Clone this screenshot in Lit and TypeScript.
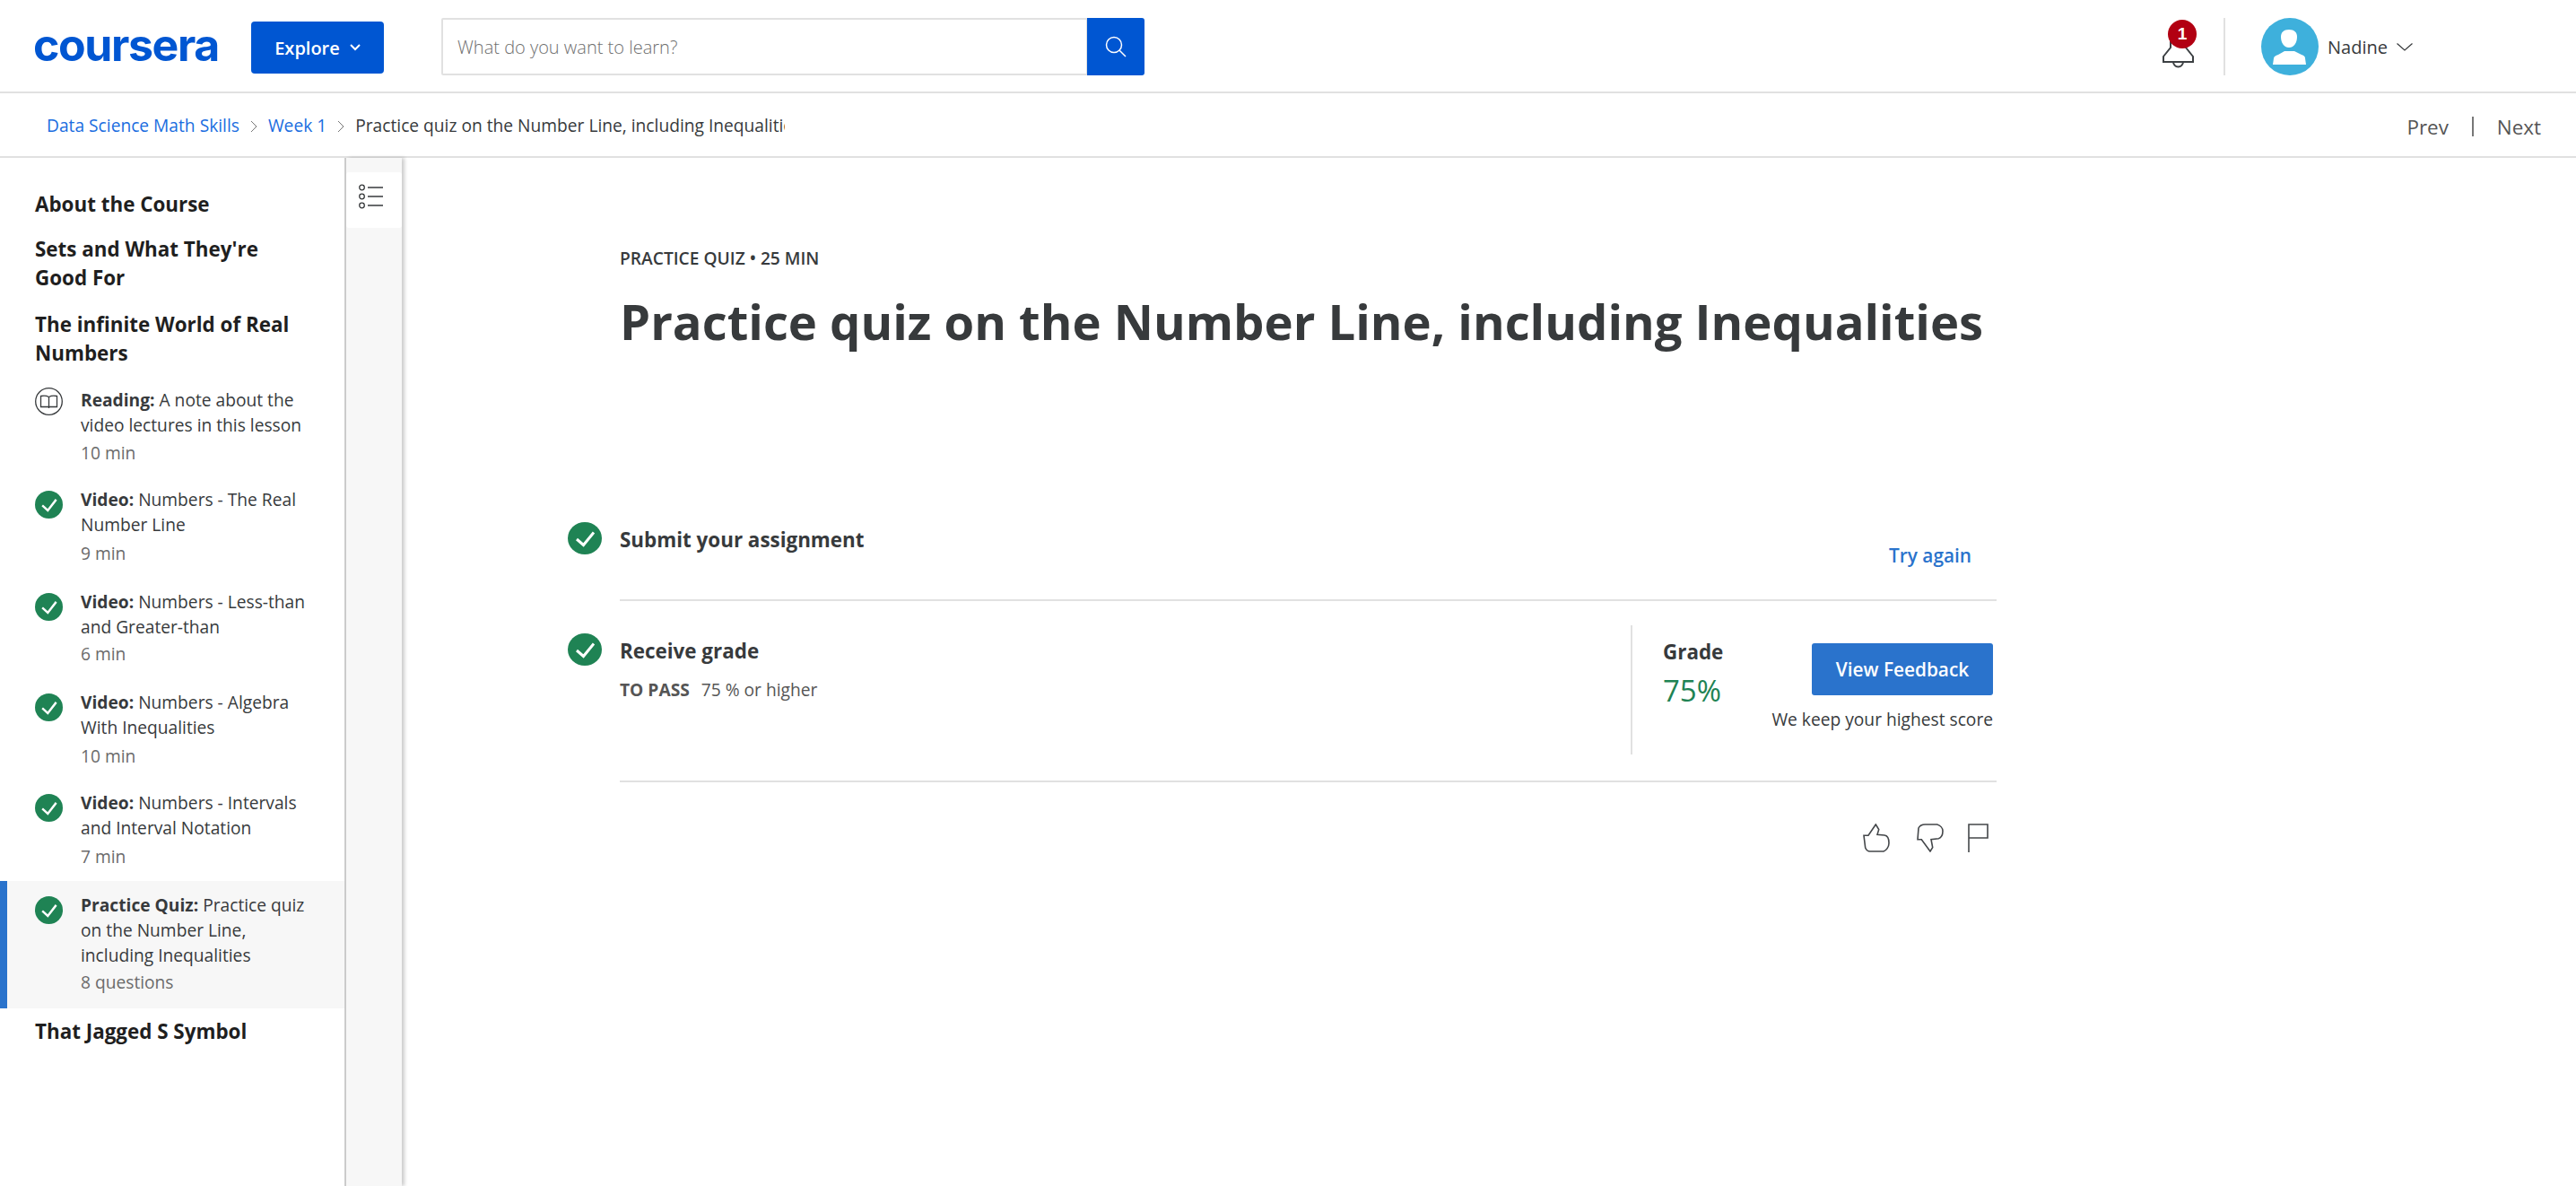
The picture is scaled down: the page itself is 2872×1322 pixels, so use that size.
import {LitElement, html, css, svg} from 'lit';
import {customElement} from 'lit/decorators.js';

interface Lesson {
  kind: string;
  title: string;
  meta: string;
  gap: number;
  metaGap: number;
  done?: boolean;
  active?: boolean;
}

const lessons: Lesson[] = [
  {kind: 'Reading:', title: 'A note about the video lectures in this lesson', meta: '10 min', gap: 22, metaGap: 3},
  {kind: 'Video:', title: 'Numbers - The Real Number Line', meta: '9 min', gap: 24, metaGap: 4, done: true},
  {kind: 'Video:', title: 'Numbers - Less-than and Greater-than', meta: '6 min', gap: 26, metaGap: 2, done: true},
  {kind: 'Video:', title: 'Numbers - Algebra With Inequalities', meta: '10 min', gap: 26, metaGap: 4, done: true},
  {kind: 'Video:', title: 'Numbers - Intervals and Interval Notation', meta: '7 min', gap: 24, metaGap: 4, done: true},
  {kind: 'Practice Quiz:', title: 'Practice quiz on the Number Line, including Inequalities', meta: '8 questions', gap: 13, metaGap: 2, done: true, active: true},
];

const check = (cls: string) => html`
  <svg class=${cls} viewBox="0 0 38 36" preserveAspectRatio="none">
    <ellipse cx="19" cy="18" rx="19" ry="18" fill="#1f8354"></ellipse>
    <path d="M10 19l7.500 6.500L29 11.500" fill="none" stroke="#fff" stroke-width="3"></path>
  </svg>
`;

const bookIcon = svg`
  <circle cx="15.500" cy="15.500" r="14.800" fill="none" stroke="#373a3c" stroke-width="1.300"></circle>
  <path d="M15.500 10.500C13 9 9 9 6.500 9.500V21.500H15.500M15.500 10.500C18 9 22 9 24.500 9.500V21.500H15.500M15.500 10.500V23" fill="none" stroke="#373a3c" stroke-width="1.300"></path>
`;

@customElement('app-root')
export class AppRoot extends LitElement {
  static styles = css`
    :host {
      display: block;
      height: 1322px;
      overflow: hidden;
      background: #fff;
      color: #373a3c;
      font-family: 'Open Sans', sans-serif;
    }
    .header {
      box-sizing: border-box;
      display: flex;
      align-items: center;
      height: 104px;
      padding: 2px 182px 0 38px;
      border-bottom: 2px solid #e1e1e1;
    }
    .logo {
      width: 205px;
      margin: -4px 0 0 -1px;
      font-family: Inter, sans-serif;
      font-size: 50px;
      font-weight: 700;
      letter-spacing: -1.400px;
      line-height: 60px;
      color: #0056d2;
      white-space: nowrap;
    }
    .explore {
      display: flex;
      align-items: center;
      justify-content: center;
      gap: 11px;
      width: 148px;
      height: 58px;
      margin: 2px 0 0 38px;
      background: #0056d2;
      border-radius: 4px;
      color: #fff;
      font-size: 20px;
      font-weight: 600;
    }
    .search {
      display: flex;
      width: 784px;
      height: 64px;
      margin-left: 64px;
    }
    .search input {
      flex: 1;
      min-width: 0;
      box-sizing: border-box;
      padding: 0 16px;
      border: 2px solid #e1e1e1;
      border-right-width: 1px;
      border-radius: 2px 0 0 2px;
      outline: none;
      font: 300 20px 'Open Sans', sans-serif;
    }
    .search input::placeholder {
      color: #6f6f6f;
      opacity: 1;
    }
    .search-btn {
      display: flex;
      align-items: center;
      justify-content: center;
      width: 64px;
      background: #0056d2;
      border-radius: 0 3px 3px 0;
    }
    .bell {
      position: relative;
      width: 39px;
      height: 64px;
      margin-left: auto;
    }
    .bell svg {
      display: block;
      margin-top: 2px;
    }
    .badge {
      position: absolute;
      left: 7px;
      top: 2px;
      width: 32px;
      height: 32px;
      border-radius: 50%;
      background: #b20012;
      color: #fff;
      font: 700 19px/32px 'Liberation Sans', sans-serif;
      text-align: center;
    }
    .rule {
      width: 2px;
      height: 64px;
      margin: 0 40px 0 30px;
      background: #e1e1e1;
    }
    .avatar {
      display: block;
      width: 64px;
      height: 64px;
    }
    .name {
      margin: 0 10px;
      font-size: 20px;
    }
    .crumbs {
      display: flex;
      align-items: center;
      height: 70px;
      padding: 0 39px 0 52px;
      border-bottom: 2px solid #e1e1e1;
      font-size: 19.200px;
      white-space: nowrap;
    }
    .crumbs a {
      color: #1a6de0;
    }
    .crumbs svg {
      flex: none;
      margin: 4px 12px 0 12px;
    }
    .current {
      width: 479px;
      overflow: hidden;
    }
    .pager {
      display: flex;
      align-items: center;
      margin: 4px 0 0 auto;
      font-size: 22.400px;
      color: #555;
    }
    .pager i {
      width: 2px;
      height: 22px;
      margin: 0 26px;
      background: #777;
    }
    .body {
      display: flex;
      height: 1146px;
    }
    .sidebar {
      box-sizing: border-box;
      width: 386px;
      flex: none;
      padding-top: 36px;
      border-right: 2px solid #ccc;
    }
    .section {
      margin: 0;
      padding: 0 40px 0 39px;
      font-size: 22.400px;
      font-weight: 700;
      line-height: 32px;
      color: #1f1f1f;
    }
    .sets {
      margin-top: 18px;
    }
    .infinite {
      margin-top: 20px;
    }
    .jagged {
      margin-top: 10px;
    }
    .item {
      display: flex;
      gap: 20px;
      padding-left: 39px;
      padding-right: 26px;
      font-size: 19.200px;
      line-height: 28px;
    }
    .item.active {
      padding: 13px 26px 15px 31px;
      border-left: 8px solid #2a73cc;
      background: #f7f7f7;
    }
    .item svg {
      flex: none;
      width: 31px;
      height: 31px;
    }
    .item .small-check {
      margin-top: 4px;
    }
    .item b {
      font-weight: 700;
    }
    .meta {
      color: #6b6b6b;
    }
    .rail {
      flex: none;
      width: 62px;
      padding-top: 16px;
      background: #f7f7f7;
      box-shadow: 3px 0 4px rgba(0, 0, 0, 0.2);
    }
    .rail-btn {
      box-sizing: border-box;
      height: 62px;
      padding: 13px 0 0 14px;
      background: #fff;
      border-radius: 3px;
    }
    .main {
      flex: 1;
      padding: 100px 0 0 185px;
    }
    .content {
      width: 1593px;
    }
    .heading {
      padding-left: 58px;
    }
    .eyebrow {
      font-size: 19.200px;
      font-weight: 600;
      line-height: 24px;
    }
    h1 {
      margin: 22px 0 188px;
      font-size: 54.400px;
      font-weight: 700;
      line-height: 72px;
      white-space: nowrap;
    }
    .step {
      display: flex;
      gap: 20px;
    }
    .big-check {
      flex: none;
      display: block;
      width: 38px;
      height: 36px;
    }
    .step-body {
      flex: 1;
      display: flex;
      justify-content: space-between;
      border-bottom: 2px solid #e1e1e1;
    }
    .submit {
      height: 86px;
    }
    .receive-step .big-check {
      margin-top: 36px;
    }
    .receive {
      height: 200px;
    }
    .step-title {
      font-size: 22.400px;
      font-weight: 700;
      line-height: 32px;
    }
    .submit .step-title {
      margin-top: 4px;
    }
    .try {
      margin: 23px 28px 0 0;
      color: #2a73cc;
      font-size: 20.800px;
      font-weight: 600;
      line-height: 28px;
    }
    .receive-info {
      padding-top: 40px;
    }
    .pass {
      margin-top: 15px;
      font-size: 19.200px;
      line-height: 24px;
      color: #555;
    }
    .pass b {
      margin-right: 8px;
      font-weight: 700;
    }
    .grade-panel {
      box-sizing: border-box;
      display: flex;
      justify-content: space-between;
      width: 408px;
      height: 144px;
      margin-top: 27px;
      padding: 14px 4px 0 34px;
      border-left: 2px solid #e1e1e1;
    }
    .score {
      margin-top: 5px;
      color: #1f8354;
      font-size: 33px;
      line-height: 44px;
    }
    .actions {
      display: flex;
      flex-direction: column;
      align-items: flex-end;
      margin-top: 6px;
    }
    .feedback {
      display: flex;
      align-items: center;
      justify-content: center;
      width: 202px;
      height: 58px;
      background: #2a73cc;
      border-radius: 3px;
      color: #fff;
      font-size: 20.800px;
      font-weight: 600;
    }
    .note {
      margin-top: 13px;
      font-size: 19.200px;
      line-height: 28px;
      white-space: nowrap;
    }
    .rating {
      display: flex;
      justify-content: flex-end;
      gap: 30px;
      margin-top: 46px;
      padding-right: 9px;
    }
    .rating svg {
      display: block;
    }
    .rating svg:last-child {
      margin-left: -3px;
    }
  `;

  renderLesson(l: Lesson) {
    return html`
      <div class="item ${l.active ? 'active' : ''}" style="margin-top:${l.gap}px">
        ${l.done ? check('small-check') : html`<svg viewBox="0 0 31 31">${bookIcon}</svg>`}
        <div>
          <div><b>${l.kind}</b> ${l.title}</div>
          <div class="meta" style="margin-top:${l.metaGap}px">${l.meta}</div>
        </div>
      </div>
    `;
  }

  render() {
    return html`
      <div class="header">
        <div class="logo">coursera</div>
        <div class="explore">
          Explore
          <svg width="12" height="8" viewBox="0 0 12 8"><path d="M1 1l5 5 5-5" fill="none" stroke="#fff" stroke-width="2"></path></svg>
        </div>
        <div class="search">
          <input placeholder="What do you want to learn?" />
          <div class="search-btn">
            <svg width="24" height="24" viewBox="0 0 24 24" fill="none" stroke="#fff" stroke-width="1.500">
              <circle cx="10" cy="10" r="8.500"></circle>
              <path d="M16 16l7 7"></path>
            </svg>
          </div>
        </div>
        <div class="bell">
          <svg width="38" height="56" viewBox="0 0 38 56" fill="none" stroke="#3c4043" stroke-width="2">
            <path d="M1 47H36M2 47V41L10 31V20M35 47V41L27 31V20M13 47a5.500 5.500 0 0 0 11 0"></path>
          </svg>
          <div class="badge">1</div>
        </div>
        <div class="rule"></div>
        <svg class="avatar" viewBox="0 0 64 64">
          <circle cx="32" cy="32" r="32" fill="#3eb0dc"></circle>
          <path d="M31 13c-6 0-9 3-9 8 0 6 3 12 9 12s9-6 9-12c0-5-3-8-9-8zM13 52l1-7c0-2 2-3 5-4l7-4h11l8 4c3 1 4 2 4 4l1 7z" fill="#fff"></path>
        </svg>
        <div class="name">Nadine</div>
        <svg width="18" height="9" viewBox="0 0 18 9"><path d="M0.500 0.500L9 8l8.500-7.500" fill="none" stroke="#373a3c" stroke-width="1.200"></path></svg>
      </div>

      <div class="crumbs">
        <a>Data Science Math Skills</a>
        <svg width="8" height="14" viewBox="0 0 8 14"><path d="M1 1l6 6-6 6" fill="none" stroke="#777" stroke-width="1"></path></svg>
        <a>Week 1</a>
        <svg width="8" height="14" viewBox="0 0 8 14"><path d="M1 1l6 6-6 6" fill="none" stroke="#777" stroke-width="1"></path></svg>
        <div class="current">Practice quiz on the Number Line, including Inequalities</div>
        <div class="pager"><span>Prev</span><i></i><span>Next</span></div>
      </div>

      <div class="body">
        <div class="sidebar">
          <h3 class="section">About the Course</h3>
          <h3 class="section sets">Sets and What They're Good For</h3>
          <h3 class="section infinite">The infinite World of Real Numbers</h3>
          ${lessons.map((l) => this.renderLesson(l))}
          <h3 class="section jagged">That Jagged S Symbol</h3>
        </div>
        <div class="rail">
          <div class="rail-btn">
            <svg width="28" height="28" viewBox="0 0 28 28" fill="none" stroke="#373a3c" stroke-width="1.300">
              <circle cx="3.500" cy="4" r="2.800"></circle>
              <circle cx="3.500" cy="14" r="2.800"></circle>
              <circle cx="3.500" cy="24" r="2.800"></circle>
              <path d="M10 4H27M10 14H27M10 24H27"></path>
            </svg>
          </div>
        </div>
        <div class="main">
          <div class="content">
            <div class="heading">
              <div class="eyebrow">PRACTICE QUIZ • 25 MIN</div>
              <h1>Practice quiz on the Number Line, including Inequalities</h1>
            </div>
            <div class="step">
              ${check('big-check')}
              <div class="step-body submit">
                <div class="step-title">Submit your assignment</div>
                <div class="try">Try again</div>
              </div>
            </div>
            <div class="step receive-step">
              ${check('big-check')}
              <div class="step-body receive">
                <div class="receive-info">
                  <div class="step-title">Receive grade</div>
                  <div class="pass"><b>TO PASS</b> 75 % or higher</div>
                </div>
                <div class="grade-panel">
                  <div>
                    <div class="step-title">Grade</div>
                    <div class="score">75%</div>
                  </div>
                  <div class="actions">
                    <div class="feedback">View Feedback</div>
                    <div class="note">We keep your highest score</div>
                  </div>
                </div>
              </div>
            </div>
            <div class="rating">
              <svg width="30" height="32" viewBox="0 0 30 32" fill="none" stroke="#44474a" stroke-width="1.600">
                <path d="M14.300 1L6 13.300H1L2.700 27C4 30 6 31 7.700 31H23C26 30 29 26 29 21.700C29 16 27 13.300 24 13L16 12.300L17.700 6.700Z"></path>
              </svg>
              <svg width="30" height="32" viewBox="0 0 30 32" fill="none" stroke="#44474a" stroke-width="1.600">
                <path d="M9.300 1H22.700C26 2 29 5 29 8.300C29 13 27 16 24.300 16.700L16 17.700L17.700 26.700L15 31L5.300 17.700H1L2 5C3 3 6 1 9.300 1Z"></path>
              </svg>
              <svg width="23" height="32" viewBox="0 0 23 32" fill="none" stroke="#44474a" stroke-width="1.600">
                <path d="M1 32V1H22V16H1"></path>
              </svg>
            </div>
          </div>
        </div>
      </div>
    `;
  }
}
